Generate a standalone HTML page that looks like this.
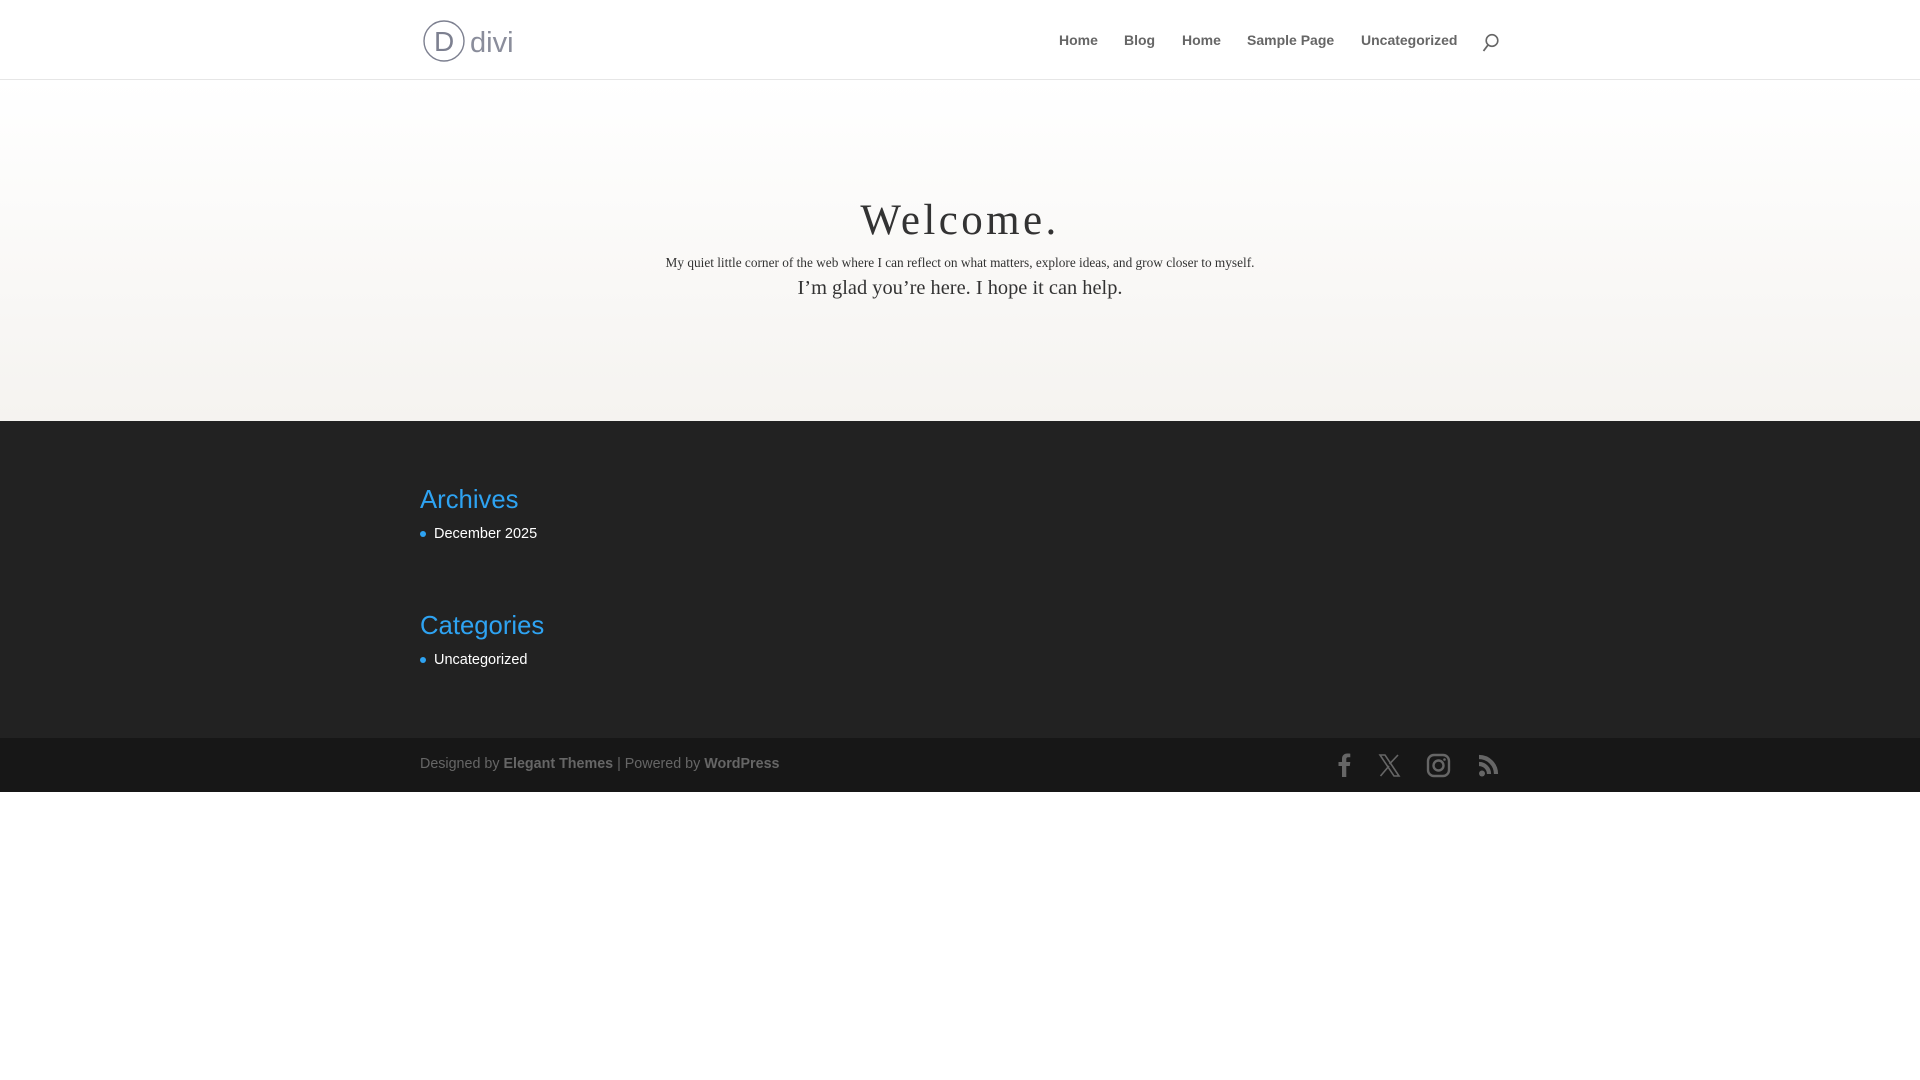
<!DOCTYPE html>
<html><head><meta charset="utf-8"><style>
*{margin:0;padding:0;box-sizing:border-box}
body{width:1920px;height:1080px;background:#fff;font-family:"Liberation Sans",sans-serif;position:relative;overflow:hidden}
.abs{position:absolute}
header{position:absolute;left:0;top:0;width:1920px;height:80px;background:#fff;border-bottom:1px solid #e6e6e6;box-shadow:0 1px 0 rgba(0,0,0,.04)}
.nav{position:absolute;top:32px;font-size:14px;font-weight:bold;color:#666;white-space:nowrap;line-height:16px}
.hero{position:absolute;left:0;top:80px;width:1920px;height:341px;background:linear-gradient(#fff,#f5f3f0)}
.c{position:absolute;left:0;width:1920px;text-align:center;font-family:"Liberation Serif",serif;color:#333}
.foot{position:absolute;left:0;top:421px;width:1920px;height:317px;background:#222}
.h{position:absolute;left:420px;font-size:25.7px;color:#2ea3f2}
.li{position:absolute;left:434px;font-size:14.5px;color:#fff}
.dot{position:absolute;left:420px;width:6px;height:6px;border-radius:50%;background:#2ea3f2}
.bar{position:absolute;left:0;top:738px;width:1920px;height:54px;background:#171717}
</style></head><body>
<header>
<svg class="abs" style="left:423px;top:20px" width="96" height="44" viewBox="0 0 96 44">
<circle cx="21" cy="21" r="20" fill="none" stroke="#7d8090" stroke-width="1.4"/>
<text x="11" y="31" font-family="Liberation Sans" font-size="28" fill="#7d8090">D</text>
<text x="47" y="32" font-family="Liberation Sans" font-size="29" fill="#8a8d9b">divi</text>
</svg>
<div class="nav" style="left:1059px">Home</div>
<div class="nav" style="left:1124px">Blog</div>
<div class="nav" style="left:1182px">Home</div>
<div class="nav" style="left:1247px">Sample Page</div>
<div class="nav" style="left:1361px">Uncategorized</div>
<svg class="abs" style="left:1482px;top:33px" width="18" height="20" viewBox="0 0 18 20"><circle cx="10" cy="7.5" r="5.8" fill="none" stroke="#666" stroke-width="1.6"/><path d="M6 12 L1.5 18" stroke="#666" stroke-width="1.8"/></svg>
</header>
<div class="hero">
<div class="c" style="top:116px;font-size:43px;letter-spacing:3.4px">Welcome.</div>
<div class="c" style="top:175px;font-size:13.3px">My quiet little corner of the web where I can reflect on what matters, explore ideas, and grow closer to myself.</div>
<div class="c" style="top:197px;font-size:20.4px">I’m glad you’re here. I hope it can help.</div>
</div>
<div class="foot">
<div class="h" style="top:65px">Archives</div>
<div class="dot" style="top:110px"></div><div class="li" style="top:105px">December 2025</div>
<div class="h" style="top:191px">Categories</div>
<div class="dot" style="top:236px"></div><div class="li" style="top:231px">Uncategorized</div>
</div>
<div class="bar">
<div class="abs" style="left:420px;top:18px;font-size:14.3px;color:#666">Designed by <b>Elegant Themes</b> | Powered by <b>WordPress</b></div>
<svg class="abs" style="left:1332px;top:13px" width="170" height="28" viewBox="0 0 170 28">
<path d="M10 26V15H6.5v-4H10V8c0-3.5 2-5.5 5.3-5.5 1.5 0 2.7.1 3 .2v3.6h-2c-1.7 0-2 .8-2 2V11h4l-.5 4H14.3v11z" fill="#666"/>
<path d="M48 4h5l14 21h-5z M48.5 25L57 15 M57.5 13L66 4" stroke="#666" stroke-width="1.6" fill="none"/>
<rect x="96" y="4" width="21" height="21" rx="6" fill="none" stroke="#666" stroke-width="2.4"/>
<circle cx="106.5" cy="14.5" r="5" fill="none" stroke="#666" stroke-width="2.4"/><circle cx="112.5" cy="8.5" r="1.3" fill="#666"/>
<circle cx="150" cy="22.5" r="3" fill="#666"/>
<path d="M147 13a10 10 0 0 1 10 10 M147 6a17 17 0 0 1 17 17" stroke="#666" stroke-width="4.2" fill="none"/>
</svg>
</div>
</body></html>
